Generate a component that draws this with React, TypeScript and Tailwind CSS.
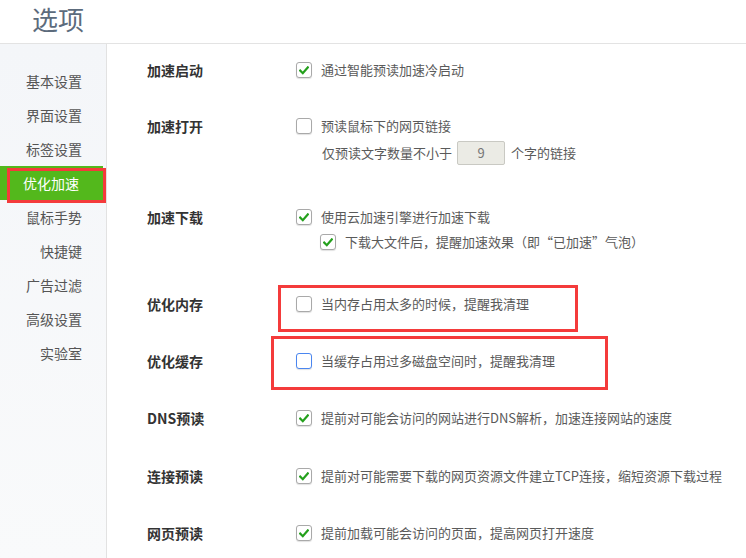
import type { ReactNode } from 'react'

const FONT = { fontFamily: '"Noto Sans CJK SC", "Noto Sans", "Liberation Sans", sans-serif' }

const NAV = ['基本设置', '界面设置', '标签设置', '优化加速', '鼠标手势', '快捷键', '广告过滤', '高级设置', '实验室']

function Check({ checked, focus }: { checked?: boolean; focus?: boolean }) {
  return (
    <span className={`flex h-4 w-4 shrink-0 items-center justify-center rounded-[3px] border bg-white shadow-[0_1px_1px_rgba(0,0,0,0.12)] ${focus ? 'border-[#4a86f0]' : 'border-[#a9a9a9]'}`}>
      {checked && (
        <svg width="10" height="9" viewBox="0 0 10 9">
          <path d="M1.2 4.6 L3.8 7.2 L8.8 1.4" fill="none" stroke="#24a01c" strokeWidth="2.2" strokeLinecap="square" />
        </svg>
      )}
    </span>
  )
}

function Option({ checked, focus, children }: { checked?: boolean; focus?: boolean; children: ReactNode }) {
  return (
    <div className="flex h-[22px] items-center gap-[9px] text-[13px] text-[#5a5a5a]">
      <Check checked={checked} focus={focus} />
      <span>{children}</span>
    </div>
  )
}

function Row({ label, className, children }: { label: string; className: string; children: ReactNode }) {
  return (
    <div className={`flex ${className}`}>
      <div className="flex h-[22px] w-[149px] shrink-0 items-center text-[14px] font-bold text-[#333]">{label}</div>
      <div className="flex flex-col">{children}</div>
    </div>
  )
}

export default function App() {
  return (
    <div style={FONT} className="relative flex h-[558px] w-[746px] flex-col overflow-hidden bg-white">
      <header className="h-[44px] shrink-0 border-b border-[#e3e3e3] pl-[32px]">
        <h1 className="pt-[1px] text-[26px] leading-[36px] text-[#5c6b7c]">选项</h1>
      </header>
      <div className="flex flex-1">
        <nav className="w-[107px] shrink-0 border-r border-[#e2e2e2] bg-gradient-to-b from-[#f4f6f9] to-[#f9fafb] pt-[20px]">
          {NAV.map((item) => (
            <div
              key={item}
              className={`flex h-[34px] items-center justify-end pr-[24px] text-[14px] ${item === '优化加速' ? 'mr-[3px] bg-[#53b81c] text-white' : 'text-[#555]'}`}
            >
              {item}
            </div>
          ))}
        </nav>
        <main className="flex-1 pl-[40px] pt-[15px]">
          <Row label="加速启动" className="">
            <Option checked>通过智能预读加速冷启动</Option>
          </Row>
          <Row label="加速打开" className="mt-[34px]">
            <Option>预读鼠标下的网页链接</Option>
            <div className="mt-[4px] flex h-[24px] items-center pl-[26px] text-[13px] text-[#5a5a5a]">
              <span>仅预读文字数量不小于</span>
              <span className="ml-[5px] flex h-[24px] w-[48px] items-center justify-center rounded-[2px] border border-[#c9c9c3] bg-[#ebebe5] text-[#777]">9</span>
              <span className="ml-[6px]">个字的链接</span>
            </div>
          </Row>
          <Row label="加速下载" className="mt-[41px]">
            <Option checked>使用云加速引擎进行加速下载</Option>
            <div className="mt-[3px] pl-[24px]">
              <Option checked>下载大文件后，提醒加速效果（即“已加速”气泡）</Option>
            </div>
          </Row>
          <Row label="优化内存" className="mt-[40px]">
            <Option>当内存占用太多的时候，提醒我清理</Option>
          </Row>
          <Row label="优化缓存" className="mt-[35px]">
            <Option focus>当缓存占用过多磁盘空间时，提醒我清理</Option>
          </Row>
          <Row label="DNS预读" className="mt-[35px]">
            <Option checked>提前对可能会访问的网站进行DNS解析，加速连接网站的速度</Option>
          </Row>
          <Row label="连接预读" className="mt-[36px]">
            <Option checked>提前对可能需要下载的网页资源文件建立TCP连接，缩短资源下载过程</Option>
          </Row>
          <Row label="网页预读" className="mt-[35px]">
            <Option checked>提前加载可能会访问的页面，提高网页打开速度</Option>
          </Row>
        </main>
      </div>
      <div className="pointer-events-none absolute left-[7px] top-[168px] h-[35px] w-[99px] border-[3px] border-[#f43b3b]" />
      <div className="pointer-events-none absolute left-[278px] top-[285px] h-[47px] w-[300px] border-[3px] border-[#f43b3b]" />
      <div className="pointer-events-none absolute left-[271px] top-[336px] h-[54px] w-[337px] border-[3px] border-[#f43b3b]" />
    </div>
  )
}
